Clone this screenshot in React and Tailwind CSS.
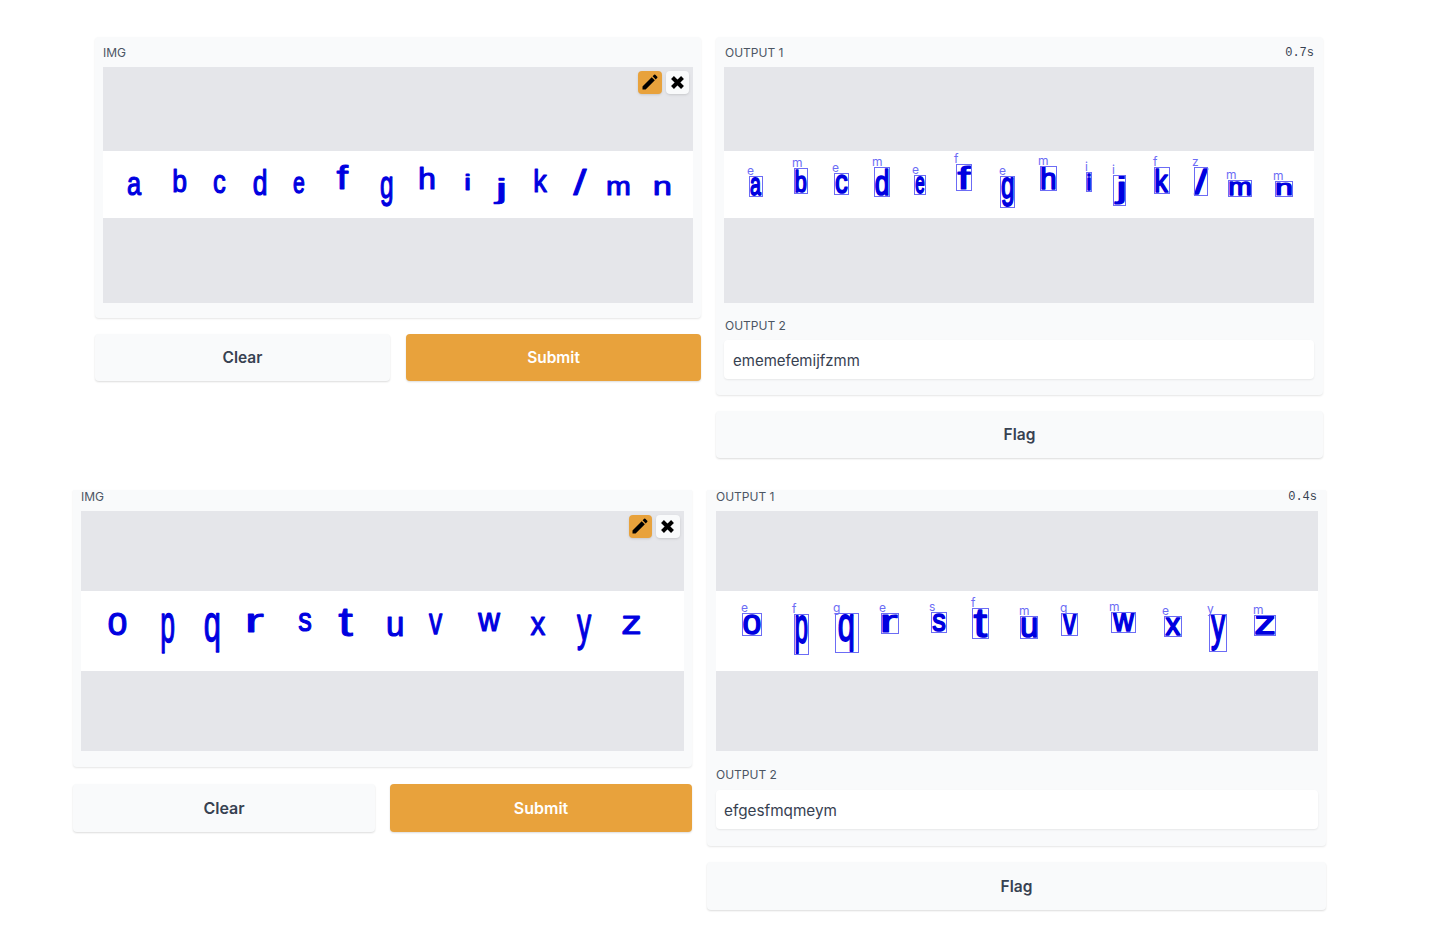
import React from "react";

const FONT = '"Liberation Sans", Arial, sans-serif';
const ctx = typeof document !== "undefined" ? document.createElement("canvas").getContext("2d") : null;

function Letter({ g, weight }) {
  const [ch, x0, x1, y0, y1, skew] = g;
  ctx.font = `100px ${FONT}`;
  const m = ctx.measureText(ch);
  const inkW = m.actualBoundingBoxLeft + m.actualBoundingBoxRight;
  const inkH = m.actualBoundingBoxAscent + m.actualBoundingBoxDescent;
  const pad = 0.9;
  const sx = Math.max(x1 - x0 - pad * 2, 1) / inkW;
  const sy = Math.max(y1 - y0 - pad * 2, 1) / inkH;
  const tx = x0 + pad + m.actualBoundingBoxLeft * sx;
  const ty = y0 + pad + m.actualBoundingBoxAscent * sy;
  const cx = (x0 + x1) / 2;
  const cy = (y0 + y1) / 2;
  const lean = skew ? `translate(${cx} ${cy}) skewX(${skew}) translate(${-cx} ${-cy}) ` : "";
  return (
    <text
      transform={`${lean}translate(${tx} ${ty}) scale(${sx} ${sy})`}
      fontFamily={FONT}
      fontSize="100"
      fill="#0000e0"
      stroke="#0000e0"
      strokeWidth={weight}
      strokeLinejoin="round"
      vectorEffect="non-scaling-stroke"
    >
      {ch}
    </text>
  );
}

function Box({ b }) {
  const [label, lx, x0, x1, y0, y1] = b;
  return (
    <g>
      <rect x={x0 + 0.5} y={y0 + 0.5} width={x1 - x0 - 1} height={y1 - y0 - 1} fill="none" stroke="#6c6cf5" strokeWidth="1" />
      <text x={lx} y={y0 - 1} fontFamily="Inter, sans-serif" fontSize="12" fill="#6c6cf5">
        {label}
      </text>
    </g>
  );
}

function Band({ view, h, glyphs, boxes }) {
  return (
    <div className="bg-white">
      <svg viewBox={view} className="block w-full" style={{ height: h }}>
        {glyphs.map((g, i) => (
          <Letter key={i} g={g} weight={boxes ? 1.5 : 1.1} />
        ))}
        {boxes && boxes.map((b, i) => <Box key={i} b={b} />)}
      </svg>
    </div>
  );
}

function Pencil() {
  return (
    <svg viewBox="0 0 24 24" className="h-5 w-5" fill="black">
      <path d="M3 17.25V21h3.75L17.81 9.94l-3.75-3.75L3 17.25zM20.71 7.04a1 1 0 0 0 0-1.41l-2.34-2.34a1 1 0 0 0-1.41 0l-1.83 1.83 3.75 3.75 1.83-1.83z" />
    </svg>
  );
}

function Cross() {
  return (
    <svg viewBox="0 0 24 24" className="h-[15px] w-[15px]" stroke="black" strokeWidth="6.5" fill="none">
      <path d="M4 4 L20 20 M20 4 L4 20" />
    </svg>
  );
}

function ImageArea({ grayTop, grayBottom, bandH, view, glyphs, boxes, tools }) {
  return (
    <div className="relative">
      <div className="bg-[#e5e6ea]" style={{ height: grayTop }} />
      <Band view={view} h={bandH} glyphs={glyphs} boxes={boxes} />
      <div className="bg-[#e5e6ea]" style={{ height: grayBottom }} />
      {tools && (
        <div className={"absolute top-[3.5px] flex gap-[4px] " + tools}>
          <div className="flex h-[23.5px] w-[23.5px] items-center justify-center rounded bg-[#e8a23c] shadow-sm">
            <Pencil />
          </div>
          <div className="flex h-[23.5px] w-[23.5px] items-center justify-center rounded bg-[#f9fafb] shadow-sm">
            <Cross />
          </div>
        </div>
      )}
    </div>
  );
}

function Label({ children, time, className = "", timeClass = "" }) {
  return (
    <div className={"flex h-[14px] items-center justify-between text-[12px] leading-none text-[#4b5563] " + className}>
      <span>{children}</span>
      {time && <span className={"font-['Liberation_Mono',monospace] text-[#374151] " + timeClass}>{time}</span>}
    </div>
  );
}

function Btn({ children, primary, className }) {
  return (
    <div
      className={
        (primary ? "bg-[#e8a23c] text-white " : "bg-[#f9fafb] text-[#374151] ") +
        "flex items-center justify-center rounded font-semibold shadow-[0_1px_2px_rgba(0,0,0,0.14)] " +
        className
      }
    >
      {children}
    </div>
  );
}

const top1 = [
  ["a", 127, 142, 176, 196], ["b", 173, 187, 168, 193], ["c", 213, 226, 174, 194], ["d", 253, 267, 168, 196],
  ["e", 293, 305, 176, 194], ["f", 336, 349, 164, 190], ["g", 380, 393, 176, 207], ["h", 419, 435, 167, 190],
  ["i", 465, 470, 173, 191], ["j", 493, 505, 177, 205], ["k", 534, 548, 168, 193], ["l", 577, 583, 168, 196, -20],
  ["m", 607, 630, 180, 196], ["n", 654, 671, 180, 196],
];
const topBoxes = [
  ["e", 747, 749, 763, 176, 197], ["m", 792, 794, 808, 168, 194], ["e", 832, 834, 849, 173, 195], ["m", 872, 874, 890, 167, 197],
  ["e", 912, 914, 926, 175, 195], ["f", 954, 956, 972, 164, 191], ["e", 999, 1000, 1015, 176, 208], ["m", 1038, 1040, 1057, 166, 191],
  ["i", 1085, 1086, 1092, 172, 192], ["i", 1112, 1113, 1126, 175, 206], ["f", 1153, 1154, 1170, 167, 194], ["z", 1192, 1194, 1208, 167, 196],
  ["m", 1226, 1228, 1252, 180, 197], ["m", 1273, 1275, 1293, 181, 197],
];
const top2 = topBoxes.map((b, i) =>
  top1[i][0] === "l"
    ? ["l", b[2] + 4, b[3] - 4, b[4] + 1, b[5] - 1, -20]
    : [top1[i][0], b[2] + 1, b[3] - 1, b[4] + 1, b[5] - 1]
);

const bot1 = [
  ["o", 108, 127, 612, 636], ["p", 161, 175, 614, 654], ["q", 204, 220, 612, 653], ["r", 247, 264, 613, 633],
  ["s", 298, 312, 612, 632], ["t", 338, 354, 608, 637], ["u", 387, 403, 616, 637], ["v", 428, 443, 614, 635],
  ["w", 477, 501, 613, 632], ["x", 530, 546, 616, 636], ["y", 576, 592, 615, 651], ["z", 622, 641, 616, 635],
];
const botBoxes = [
  ["e", 741, 742, 762, 613, 636], ["f", 792, 794, 809, 614, 655], ["g", 833, 835, 859, 613, 653], ["e", 879, 881, 899, 613, 634],
  ["s", 929, 931, 947, 612, 633], ["f", 971, 972, 989, 608, 639], ["m", 1019, 1020, 1038, 616, 639], ["q", 1060, 1061, 1078, 613, 636],
  ["m", 1109, 1111, 1136, 612, 633], ["e", 1162, 1164, 1182, 616, 637], ["y", 1207, 1209, 1227, 614, 652], ["m", 1253, 1254, 1276, 615, 636],
];
const bot2 = botBoxes.map((b, i) =>
  bot1[i][0] === "q"
    ? ["q", b[2] + 3, b[3] - 5, b[4] + 1, b[5] - 1]
    : [bot1[i][0], b[2] + 1, b[3] - 1, b[4] + 1, b[5] - 1]
);

export default function App() {
  return (
    <div className="min-h-[948px] bg-white font-['Inter',sans-serif] pt-[37px]">
      {/* first demo */}
      <div className="ml-[95px] flex w-[1228px] items-start gap-[15px]">
        <div className="flex w-[606px] flex-col gap-4">
          <div className="rounded bg-[#f9fafb] px-2 pt-[9px] pb-[15px] shadow-[0_1px_2px_rgba(0,0,0,0.1)]">
            <Label>IMG</Label>
            <div className="mt-[7px]">
              <ImageArea tools="right-[4px]" grayTop={84} grayBottom={85} bandH={67} view="103 151 590 67" glyphs={top1} />
            </div>
          </div>
          <div className="flex gap-[16px]">
            <Btn className="h-[47px] w-[295px] pt-px text-[15.5px]">Clear</Btn>
            <Btn primary className="h-[47px] w-[295px] pt-px text-[15.5px]">Submit</Btn>
          </div>
        </div>
        <div className="flex w-[607px] flex-col gap-4">
          <div className="rounded bg-[#f9fafb] pl-2 pr-[9px] pt-[9px] pb-4 shadow-[0_1px_2px_rgba(0,0,0,0.1)]">
            <Label time="0.7s" className="pl-px">OUTPUT 1</Label>
            <div className="mt-[7px]">
              <ImageArea grayTop={84} grayBottom={85} bandH={67} view="724 151 590 67" glyphs={top2} boxes={topBoxes} />
            </div>
            <div className="mt-4">
              <Label className="pl-px">OUTPUT 2</Label>
            </div>
            <div className="mt-[7px] flex h-[39px] items-center rounded bg-white pl-[9px] pr-2 pt-[3px] text-[15px] text-[#374151] shadow-[0_1px_2px_rgba(0,0,0,0.08)]">
              ememefemijfzmm
            </div>
          </div>
          <Btn className="h-[47px] pt-px text-[15.5px]">Flag</Btn>
        </div>
      </div>

      {/* second demo: the panels are cut off at their top edge */}
      <div className="mt-[32px] ml-[73px] flex w-[1253px] items-start gap-[15px]">
        <div className="flex w-[619px] flex-col gap-[17px]">
          <div className="rounded-b bg-[#f9fafb] px-2 pb-4 shadow-[0_1px_2px_rgba(0,0,0,0.1)]">
            <Label>IMG</Label>
            <div className="mt-[7px]">
              <ImageArea tools="right-[4.5px]" grayTop={80} grayBottom={80} bandH={80} view="81 591 603 80" glyphs={bot1} />
            </div>
          </div>
          <div className="flex gap-[15px]">
            <Btn className="h-[48px] w-[302px] text-[16px]">Clear</Btn>
            <Btn primary className="h-[48px] w-[302px] text-[16px]">Submit</Btn>
          </div>
        </div>
        <div className="flex w-[619px] flex-col gap-4">
          <div className="rounded-b bg-[#f9fafb] pl-[9px] pr-2 pb-[17px] shadow-[0_1px_2px_rgba(0,0,0,0.1)]">
            <Label time="0.4s" timeClass="mr-px">OUTPUT 1</Label>
            <div className="mt-[7px]">
              <ImageArea grayTop={80} grayBottom={80} bandH={80} view="716 591 602 80" glyphs={bot2} boxes={botBoxes} />
            </div>
            <div className="mt-[17px]">
              <Label>OUTPUT 2</Label>
            </div>
            <div className="mt-[8px] flex h-[39px] items-center rounded bg-white px-2 pt-[3px] text-[15.3px] text-[#374151] shadow-[0_1px_2px_rgba(0,0,0,0.08)]">
              efgesfmqmeym
            </div>
          </div>
          <Btn className="h-[48px] pt-px text-[15.5px]">Flag</Btn>
        </div>
      </div>
    </div>
  );
}
